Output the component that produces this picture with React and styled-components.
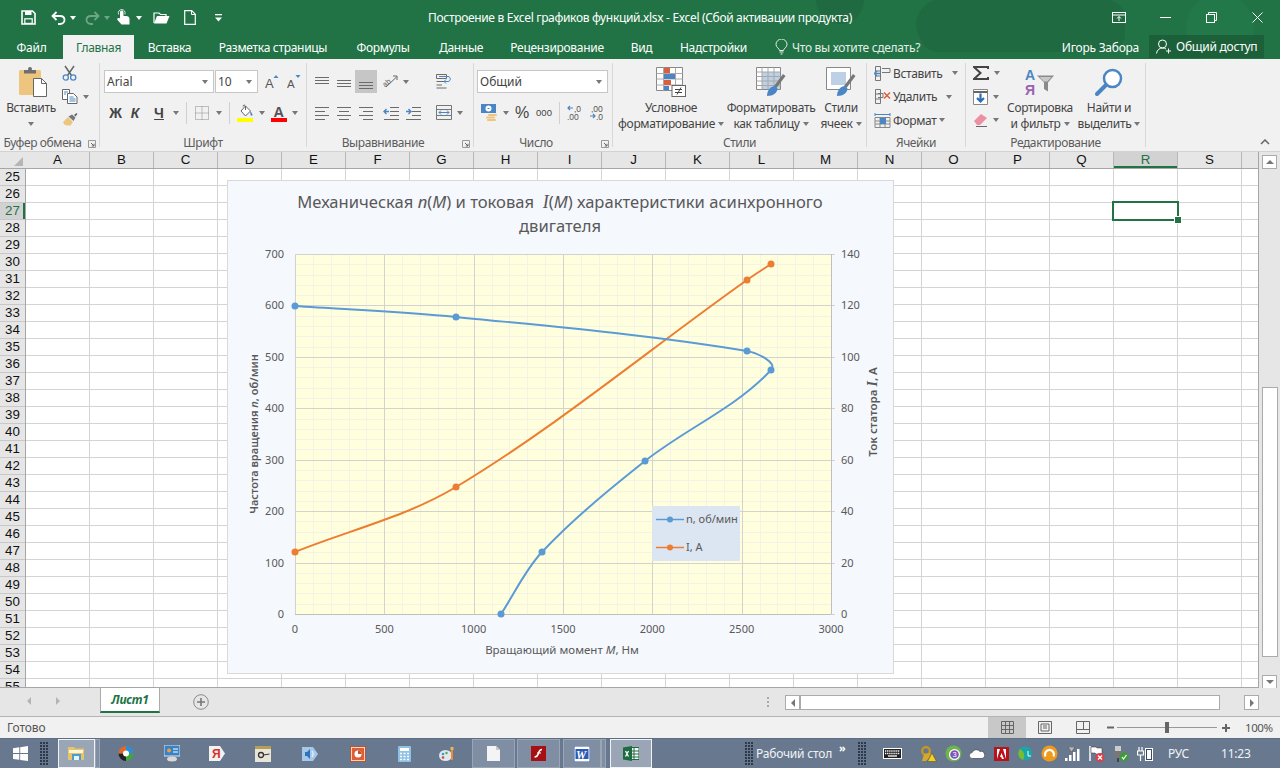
import React from 'react';
import styled, { createGlobalStyle } from 'styled-components';

const ui = '"Noto Sans", "Open Sans", sans-serif';
const green = '#217346';

const GlobalStyle = createGlobalStyle`
  html, body { margin: 0; padding: 0; background: #fff; }
  body { font-family: ${ui}; font-size: 12px; color: #444; }
  * { box-sizing: border-box; }
`;

const Frame = styled.div`
  width: 1280px;
  height: 768px;
  overflow: hidden;
  display: flex;
  flex-direction: column;
`;

/* ---------- title bar ---------- */
const Head = styled.header`
  position: relative;
  background: ${green};
  height: 59px;
  flex: none;
`;
const Pattern = styled.svg`
  position: absolute;
  left: 780px;
  top: 0;
`;
const TitleRow = styled.div`
  position: relative;
  height: 35px;
  display: grid;
  grid-template-columns: 1fr auto 1fr;
  align-items: center;
`;
const Qat = styled.div`
  display: flex;
  align-items: center;
  padding-left: 21px;
  height: 100%;
`;
const QatBtn = styled.div`
  display: flex;
  align-items: center;
  margin-left: ${p => p.$ml || 0}px;
  opacity: ${p => (p.$dim ? 0.35 : 1)};
`;
const Title = styled.div`
  color: #fff;
  font-size: 12px;
  letter-spacing: -0.33px;
  white-space: nowrap;
`;
const WinBtns = styled.div`
  display: flex;
  justify-content: flex-end;
`;
const WinBtn = styled.div`
  width: 46px;
  height: 30px;
  display: flex;
  align-items: center;
  justify-content: center;
`;
const TabRow = styled.nav`
  position: relative;
  height: 24px;
  display: flex;
  align-items: stretch;
`;
const Tab = styled.div`
  width: ${p => p.$w}px;
  display: flex;
  align-items: center;
  justify-content: center;
  color: ${p => (p.$active ? green : '#fff')};
  background: ${p => (p.$active ? '#f1f1f1' : 'transparent')};
  letter-spacing: -0.3px;
  white-space: nowrap;
`;
const Tell = styled.div`
  display: flex;
  align-items: center;
  gap: 4px;
  margin-left: 14px;
  color: #e3eee8;
  letter-spacing: -0.3px;
`;
const User = styled.div`
  margin-left: auto;
  display: flex;
  align-items: center;
  color: #fff;
  letter-spacing: -0.25px;
  white-space: nowrap;
`;
const Share = styled.div`
  width: 115px;
  height: 23px;
  margin: 0 16px 1px 10px;
  background: #1b6038;
  display: flex;
  align-items: center;
  gap: 4px;
  padding-left: 7px;
`;

/* ---------- ribbon ---------- */
const Ribbon = styled.div`
  position: relative;
  flex: none;
  height: 93px;
  background: #f1f1f1;
  border-bottom: 1px solid #d2d2d2;
  padding-top: 4px;
  display: flex;
  align-items: flex-start;
`;
const Group = styled.section`
  width: ${p => p.$w}px;
  height: 84px;
  flex: none;
  border-right: 1px solid #d8d8d8;
  display: flex;
  flex-direction: column;
`;
const GroupBody = styled.div`
  height: 73px;
  display: flex;
  padding-left: ${p => p.$pl || 0}px;
  flex-direction: ${p => (p.$col ? 'column' : 'row')};
`;
const GroupLabel = styled.div`
  height: 14px;
  line-height: 14px;
  margin-bottom: -3px;
  display: flex;
  color: #5c5c5c;
  letter-spacing: -0.4px;
  white-space: nowrap;
  span { flex: 1; text-align: center; }
`;
const Launcher = styled.svg`
  width: 14px;
  flex: none;
  margin-top: 4px;
`;
const BigBtn = styled.div`
  width: ${p => p.$w}px;
  margin-left: ${p => p.$ml || 0}px;
  flex: none;
  display: flex;
  flex-direction: column;
  align-items: center;
  line-height: 16px;
  color: #444;
  letter-spacing: -0.32px;
  white-space: nowrap;
`;
const BigIcon = styled.div`
  height: 37px;
  padding-left: ${p => p.$pl || 0}px;
  display: flex;
  align-items: center;
  justify-content: center;
`;
const TextLine = styled.div`
  height: 16px;
  display: flex;
  align-items: center;
  gap: 3px;
`;
const Caret = styled.i`
  display: inline-block;
  flex: none;
  width: 0;
  height: 0;
  margin-left: ${p => p.$ml || 0}px;
  border-left: 3.5px solid transparent;
  border-right: 3.5px solid transparent;
  border-top: 4px solid ${p => p.$c || '#777'};
`;
const Stack = styled.div`
  display: flex;
  flex-direction: column;
  gap: ${p => p.$gap || 0}px;
  padding-top: ${p => p.$pt || 0}px;
  margin-left: ${p => p.$ml || 0}px;
  width: ${p => (p.$w ? p.$w + 'px' : 'auto')};
  flex: none;
`;
const Row = styled.div`
  display: flex;
  align-items: center;
  height: ${p => p.$h || 23}px;
  margin-top: ${p => p.$mt || 0}px;
`;
const IconBtn = styled.div`
  width: ${p => p.$w || 22}px;
  height: ${p => p.$h || 23}px;
  margin-left: ${p => p.$ml || 0}px;
  flex: none;
  display: flex;
  align-items: center;
  justify-content: center;
  background: ${p => (p.$active ? '#c6c6c6' : 'transparent')};
`;
const Select = styled.div`
  width: ${p => p.$w}px;
  height: 23px;
  margin-left: ${p => p.$ml || 0}px;
  flex: none;
  background: #fff;
  border: 1px solid #c6c6c6;
  display: flex;
  align-items: center;
  justify-content: space-between;
  padding: 0 5px 0 2px;
  color: #444;
`;
const Sep = styled.div`
  width: 1px;
  height: 22px;
  flex: none;
  margin: 0 ${p => p.$r || 0}px 0 ${p => p.$l || 0}px;
  background: #d0d0d0;
`;
const FontLetter = styled.span`
  font-family: "Liberation Sans", sans-serif;
  font-size: ${p => p.$s || 14}px;
  font-weight: ${p => p.$wt || 700};
  font-style: ${p => (p.$it ? 'italic' : 'normal')};
  text-decoration: ${p => (p.$un ? 'underline' : 'none')};
  color: #444;
`;
const CellRow = styled.div`
  height: 20px;
  display: flex;
  align-items: center;
  color: #444;
  letter-spacing: -0.35px;
  white-space: nowrap;
  svg { margin-right: 2px; }
`;
const Collapse = styled.svg`
  position: absolute;
  right: 10px;
  bottom: 6px;
`;

/* ---------- sheet ---------- */
const SheetArea = styled.div`
  height: 536px;
  flex: none;
  display: flex;
  background: #e6e6e6;
`;
const GridPane = styled.div`
  width: 1259px;
  flex: none;
  display: flex;
  flex-direction: column;
  border-right: 1px solid #a6a6a6;
  border-bottom: 1px solid #a6a6a6;
`;
const ColRow = styled.div`
  height: 17px;
  flex: none;
  display: flex;
  background: #e6e6e6;
  border-bottom: 1px solid #a6a6a6;
  overflow: hidden;
`;
const Corner = styled.div`
  width: 26px;
  flex: none;
  display: flex;
  align-items: flex-end;
  justify-content: flex-end;
  padding: 0 3px 2px 0;
  &::after {
    content: '';
    border-left: 9px solid transparent;
    border-bottom: 9px solid #b5b5b5;
  }
`;
const ColHead = styled.div`
  width: 64px;
  flex: none;
  text-align: center;
  font: 13.33px/16px "Liberation Sans", sans-serif;
  color: ${p => (p.$sel ? green : '#111')};
  background: ${p => (p.$sel ? '#d2d2d2' : 'transparent')};
  border-right: 1px solid #b8b8b8;
  box-shadow: ${p => (p.$sel ? `inset 0 -2px 0 ${green}` : 'none')};
`;
const BodyRow = styled.div`
  flex: 1;
  min-height: 0;
  display: flex;
`;
const RowHeads = styled.div`
  width: 26px;
  flex: none;
  background: #e6e6e6;
  border-right: 1px solid #a6a6a6;
  overflow: hidden;
`;
const RowHead = styled.div`
  height: 17px;
  flex: none;
  text-align: center;
  font: 13.33px/16px "Liberation Sans", sans-serif;
  color: ${p => (p.$sel ? green : '#111')};
  background: ${p => (p.$sel ? '#d2d2d2' : 'transparent')};
  border-bottom: 1px solid #c8c8c8;
  box-shadow: ${p => (p.$sel ? `inset -2px 0 0 ${green}` : 'none')};
`;
const Cells = styled.div`
  position: relative;
  flex: 1;
  overflow: hidden;
  background-color: #fff;
  background-image:
    linear-gradient(to right, transparent 63px, #d4d4d4 63px),
    linear-gradient(to bottom, transparent 16px, #d4d4d4 16px);
  background-size: 64px 17px;
`;
const Selection = styled.div`
  position: absolute;
  left: 1086px;
  top: 32px;
  width: 67px;
  height: 20px;
  border: 2px solid ${green};
  &::after {
    content: '';
    position: absolute;
    right: -4px;
    bottom: -4px;
    width: 6px;
    height: 6px;
    background: ${green};
    border: 1px solid #fff;
    box-sizing: content-box;
    margin: -1px;
  }
`;
const ChartBox = styled.svg`
  position: absolute;
  left: 201px;
  top: 11px;
  font-family: ${ui};
`;
const VScroll = styled.div`
  width: 21px;
  flex: none;
  display: flex;
  flex-direction: column;
  align-items: center;
  padding-top: 3px;
`;
const ScrollBtn = styled.div`
  width: ${p => p.$w || 15}px;
  height: ${p => p.$h || 14}px;
  margin-top: ${p => p.$mt || 0}px;
  flex: none;
  background: #fff;
  border: 1px solid #ababab;
  display: flex;
  align-items: center;
  justify-content: center;
`;
const Thumb = styled.div`
  width: 16px;
  height: 270px;
  margin-top: 218px;
  flex: none;
  background: #fff;
  border: 1px solid #ababab;
`;
const TriUp = styled.i`
  width: 0;
  height: 0;
  border-left: 4px solid transparent;
  border-right: 4px solid transparent;
  border-bottom: 4px solid #777;
`;
const TriDown = styled.i`
  width: 0;
  height: 0;
  border-left: 4px solid transparent;
  border-right: 4px solid transparent;
  border-top: 4px solid #777;
`;
const TriSide = styled.i`
  width: 0;
  height: 0;
  border-top: 4px solid transparent;
  border-bottom: 4px solid transparent;
  border-${p => (p.$left ? 'right' : 'left')}: 4px solid ${p => p.$c || '#777'};
`;

/* ---------- sheet tabs + status ---------- */
const TabBar = styled.div`
  height: 28px;
  flex: none;
  background: #e6e6e6;
  display: flex;
  align-items: flex-start;
`;
const NavArrows = styled.div`
  width: 100px;
  height: 25px;
  flex: none;
  display: flex;
  align-items: center;
  gap: 25px;
  padding-left: 27px;
`;
const SheetTab = styled.div`
  width: 60px;
  height: 25px;
  flex: none;
  background: #fff;
  border-left: 1px solid #ababab;
  border-right: 1px solid #ababab;
  border-bottom: 2px solid ${green};
  color: ${green};
  font-weight: 700;
  font-style: italic;
  font-size: 12px;
  letter-spacing: -0.2px;
  display: flex;
  align-items: center;
  justify-content: center;
`;
const AddSheet = styled.svg`
  margin: 6px 0 0 33px;
  flex: none;
`;
const Grip = styled.div`
  width: 2px;
  height: 10px;
  margin: 9px 16px 0 auto;
  flex: none;
  background-image: linear-gradient(#aaa 2px, transparent 2px);
  background-size: 2px 4px;
`;
const HScroll = styled.div`
  display: flex;
  align-items: center;
  width: 473px;
  height: 15px;
  margin: 7px 22px 0 0;
  flex: none;
`;
const HThumb = styled.div`
  width: 420px;
  height: 15px;
  flex: none;
  background: #fff;
  border: 1px solid #ababab;
  margin: 0 24px 0 0;
`;
const Status = styled.footer`
  height: 22px;
  flex: none;
  background: #f1f1f1;
  border-top: 1px solid #b4b4b4;
  display: flex;
  align-items: center;
  padding-left: 7px;
  color: #555;
  letter-spacing: -0.1px;
`;
const StatusText = styled.span`
  width: 981px;
  flex: none;
`;
const ViewBtn = styled.div`
  width: 38px;
  height: 21px;
  flex: none;
  display: flex;
  align-items: center;
  justify-content: center;
  background: ${p => (p.$active ? '#c8c8c8' : 'transparent')};
`;
const Zoom = styled.div`
  display: flex;
  align-items: center;
  margin-left: 5px;
  color: #555;
`;
const Slider = styled.div`
  width: 100px;
  height: 1px;
  margin: 0 5px 0 3px;
  background: #999;
  display: flex;
  justify-content: center;
  align-items: center;
  &::after {
    content: '';
    width: 4px;
    height: 11px;
    background: #666;
  }
`;
const Percent = styled.span`
  margin-left: 15px;
  font-size: 11.5px;
  letter-spacing: -0.4px;
`;

/* ---------- taskbar ---------- */
const Taskbar = styled.div`
  height: 30px;
  flex: none;
  background: #68798f;
  display: flex;
  align-items: center;
  color: #f0f3f6;
  border-top: 1px solid #5d6d83;
`;
const TaskSlot = styled.div`
  width: ${p => p.$w}px;
  height: 29px;
  margin-left: ${p => p.$ml || 0}px;
  flex: none;
  display: flex;
  align-items: center;
  justify-content: ${p => (p.$start ? 'flex-start' : 'center')};
  white-space: nowrap;
`;
const TaskBtn = styled(TaskSlot)`
  background: ${p => (p.$active ? '#9aa6b6' : '#7f8ea2')};
  border: 1px solid ${p => (p.$active ? '#f1f4f7' : '#9aa6b6')};
`;
const Dots = styled.div`
  width: 8px;
  height: 23px;
  margin-left: ${p => p.$ml || 0}px;
  flex: none;
  background-image: radial-gradient(circle at 1px 1px, #2e3a4a 1px, transparent 1.2px);
  background-size: 3px 3px;
`;
const TaskText = styled.span`
  font-size: 12px;
  letter-spacing: -0.2px;
  margin-left: ${p => p.$ml || 0}px;
  white-space: nowrap;
`;
const More = styled.span`
  font-size: 11px;
  font-weight: 700;
  line-height: 11px;
  margin: -12px 0 0 7px;
  color: #fff;
`;

/* ---------- icons ---------- */
const S = ({ w = 16, h = 16, vb, children, ...rest }) => (
  <svg width={w} height={h} viewBox={vb || `0 0 ${w} ${h}`} fill="none" {...rest}>{children}</svg>
);
const blue = '#4a86c5';

const SaveIco = () => (
  <S w={15} h={15}>
    <path d="M1 1h10.500L14 3.500V14H1z" stroke="#fff" strokeWidth="1.600" />
    <rect x="4" y="1" width="6.500" height="4" fill="#fff" />
    <rect x="3.800" y="8.800" width="7.400" height="4.600" stroke="#fff" strokeWidth="1.200" />
  </S>
);
const UndoIco = ({ flip }) => (
  <S w={15} h={14}>
    <g transform={flip ? 'matrix(-1 0 0 1 15 0)' : undefined}>
      <path d="M5.500 1L1.500 5l4 4" stroke="#fff" strokeWidth="1.800" />
      <path d="M2 5h7c3 0 4.500 1.700 4.500 3.800S12 13 9 13H7" stroke="#fff" strokeWidth="1.800" />
    </g>
  </S>
);
const TouchIco = () => (
  <S w={15} h={18}>
    <path d="M4 9V3.200C4 1 7.500 1 7.500 3.200V7h2.500c2.200 0 3.500 1 3.500 3v5.500H5.500L1.500 11c-1-1.600.8-2.600 2.500-1.500z" fill="#fff" />
    <path d="M2.500 5.500C1.600 2.500 3.500.5 5.700.5S9.700 2.500 9 5.500" stroke="#fff" strokeWidth=".8" />
  </S>
);
const OpenIco = () => (
  <S w={17} h={13}>
    <path d="M1 12V2h5l1.500 1.500H13V5" stroke="#fff" strokeWidth="1.200" />
    <path d="M1 12.500L4 5h12.500l-3 7.500z" fill="#fff" />
  </S>
);
const NewIco = ({ c = '#fff' }) => (
  <S w={12} h={15}>
    <path d="M.7.7h7l3.600 3.600v10H.7z" stroke={c} strokeWidth="1.200" />
    <path d="M7.500.7v3.800h3.800" stroke={c} />
  </S>
);
const PageIco = () => (
  <S w={13} h={15}>
    <path d="M0 0h9l4 4v11H0z" fill="#f4f4f4" />
    <path d="M9 0v4h4z" fill="#c8c8c8" />
  </S>
);
const Customize = () => (
  <S w={9} h={9}>
    <rect x="1" y="1" width="7" height="1.300" fill="#fff" />
    <path d="M1 4.500h7L4.500 8.500z" fill="#fff" />
  </S>
);
const RibbonDisp = () => (
  <S w={14} h={11}>
    <rect x=".5" y=".5" width="13" height="10" stroke="#fff" />
    <path d="M.5 3h13" stroke="#fff" />
    <path d="M7 9V4.500M5 6.500l2-2 2 2" stroke="#fff" />
  </S>
);
const MinIco = () => <S w={11} h={11}><path d="M0 5.500h11" stroke="#fff" /></S>;
const RestoreIco = () => (
  <S w={11} h={11}>
    <rect x=".5" y="2.500" width="8" height="8" stroke="#fff" />
    <path d="M2.500 2.500v-2h8v8h-2" stroke="#fff" />
  </S>
);
const CloseIco = () => <S w={11} h={11}><path d="M.5.5l10 10M10.500.5l-10 10" stroke="#fff" /></S>;
const Bulb = () => (
  <S w={13} h={16}>
    <path d="M4.500 11.500C4.500 9.500 1 8.500 1 5.500a5.500 5.500 0 0111 0c0 3-3.500 4-3.500 6z" stroke="#e3eee8" />
    <path d="M4.500 13h4M5.500 15h2" stroke="#e3eee8" />
  </S>
);
const ShareIco = () => (
  <S w={16} h={15}>
    <circle cx="6.500" cy="5" r="4" stroke="#fff" />
    <path d="M.5 14.500c.6-3.500 2.700-5.500 6-5.500 1.500 0 2.500.3 3.500 1" stroke="#fff" />
    <path d="M12.500 9.500v5M10 12h5" stroke="#fff" />
  </S>
);
const LaunchIco = () => (
  <Launcher height="8" viewBox="0 0 14 8">
    <path d="M3.500.5h7v7h-7z" stroke="#999" fill="none" />
    <path d="M6 3l3 3M9 3.800V6H6.800" stroke="#666" fill="none" />
  </Launcher>
);
const PasteIco = () => (
  <S w={28} h={30}>
    <rect x="0" y="3" width="22" height="25" rx="1.500" fill="#eec57e" />
    <path d="M5 3h12v3.500H5z" fill="#6f6f6f" />
    <circle cx="11" cy="2" r="2" fill="#6f6f6f" />
    <path d="M14.500 11.500h8l5 5v13h-13z" fill="#fff" stroke="#666" />
    <path d="M22.500 11.500v5h5" stroke="#666" />
  </S>
);
const CutIco = () => (
  <S w={15} h={16}>
    <path d="M3 1l6.500 9.500M12 1L5.500 10.500" stroke="#666" strokeWidth="1.500" />
    <circle cx="3.800" cy="12.500" r="2.600" stroke={blue} strokeWidth="1.300" />
    <circle cx="11.200" cy="12.500" r="2.600" stroke={blue} strokeWidth="1.300" />
  </S>
);
const CopyIco = () => (
  <S w={16} h={15}>
    <path d="M.5.500h7v10h-7z" fill="#fff" stroke="#666" />
    <path d="M5.500 4.500h6l3.500 3.500v6.500H5.500z" fill="#fff" stroke="#666" />
    <path d="M2 3h4M2 5h2M7.500 8h4M7.500 10h6M7.500 12h6" stroke={blue} />
  </S>
);
const BrushIco = () => (
  <S w={16} h={15}>
    <path d="M1 10l5-5 5 5-3 4-2-1-1 1-1.500-1.500-1 .5z" fill="#eec57e" />
    <path d="M6.500 4.500l3.500-2 3.500 3-2 3.500z" fill="#777" />
    <path d="M12 3l2.500-2 1 1-2 2.500z" fill="#666" />
  </S>
);
const GrowA = ({ up, s }) => (
  <S w={14} h={16}>
    <text x="0" y="14" fontFamily="Liberation Sans" fontSize={s} fill="#555">A</text>
    <path d={up ? 'M8.500 4L11 1l2.500 3z' : 'M8.500 1h5L11 4z'} fill={blue} />
  </S>
);
const BordersIco = () => (
  <S w={14} h={14}>
    <path d="M.5.500h13v13H.5zM7 .5v13M.5 7h13" stroke="#888" strokeDasharray="1 1" />
  </S>
);
const FillIco = () => (
  <S w={17} h={18}>
    <path d="M4 7l4.500-5 5 5-5 5z" fill="#fff" stroke="#666" />
    <path d="M6 2.500C6 .5 8.500.5 8.500 3v3" stroke="#666" fill="none" />
    <path d="M13 7c2 2 2.500 3 2.500 4s-2 1-2-.5z" fill={blue} />
    <rect x="0" y="14" width="16" height="4" fill="#ffff00" />
  </S>
);
const FontColor = () => (
  <S w={17} h={18}>
    <text x="2.500" y="12.500" fontFamily="Liberation Sans" fontWeight="700" fontSize="14.500" fill="#555">A</text>
    <rect x="0" y="14" width="16" height="4" fill="#ff0000" />
  </S>
);
const Lines = ({ ys, xs = [[0, 14]], w = 14, h = 14, c = '#6b6b6b' }) => (
  <S w={w} h={h}>
    {ys.map((y, i) => {
      const [a, b] = xs[i % xs.length];
      return <path key={y} d={`M${a} ${y + 0.5}H${b}`} stroke={c} />;
    })}
  </S>
);
const OrientIco = () => (
  <S w={16} h={15}>
    <path d="M4 13L14.500 3M11 2h4v4" stroke="#666" />
    <text x="0" y="11" fontFamily="Liberation Sans" fontSize="7.500" fill="#666" transform="rotate(-40 5 8)">ab</text>
  </S>
);
const IndentIco = ({ rev }) => (
  <S w={16} h={14}>
    <path d="M7 1.500h9M7 5.500h9M7 9.500h9M1 13.500h15" stroke="#6b6b6b" />
    <path d={rev ? 'M1 5.500h5M3.500 3L6 5.500 3.500 8' : 'M1 5.500h5M3.500 3L1 5.500 3.500 8'} stroke={blue} strokeWidth="1.400" />
  </S>
);
const WrapIco = () => (
  <S w={16} h={15}>
    <path d="M.5.500h10v4H.5zM.5 7.500h10M.5 11h5.500M.5 14h10" stroke="#6b6b6b" />
    <path d="M3 2.500h9c3 0 3 5 0 5H8M10 5.500l-2 2 2 2" stroke={blue} />
  </S>
);
const MergeIco = () => (
  <S w={16} h={15}>
    <path d="M.5.500h15v14H.5zM.5 4.500h15M.5 10.500h15" stroke="#777" />
    <path d="M3 7.500h10M5 5.500l-2 2 2 2M11 5.500l2 2-2 2" stroke={blue} />
  </S>
);
const CurrencyIco = () => (
  <S w={17} h={17}>
    <rect x="0" y="0" width="15" height="9" fill={blue} />
    <ellipse cx="7.500" cy="4.500" rx="3" ry="3" fill="#fff" />
    <path d="M6.500 4.500h2" stroke={blue} />
    <rect x="7" y="10" width="9" height="2" rx="1" fill="#eec57e" />
    <rect x="5" y="12.500" width="9" height="2" rx="1" fill="#eec57e" />
    <rect x="6" y="15" width="9" height="2" rx="1" fill="#eec57e" />
  </S>
);
const ZeroIco = ({ dec }) => (
  <S w={15} h={15}>
    <text x={dec ? 1 : 7} y="6.500" fontFamily="Liberation Sans" fontSize="8.500" fill="#555">{dec ? ',00' : ',0'}</text>
    <text x={dec ? 6 : 0} y="14.500" fontFamily="Liberation Sans" fontSize="8.500" fill="#555">{dec ? ',0' : ',00'}</text>
    {dec
      ? <path d="M0 11h5M3 9l2 2-2 2" stroke={blue} strokeWidth="1.200" />
      : <path d="M1 3h5M3 1L1 3l2 2" stroke={blue} strokeWidth="1.200" />}
  </S>
);
const CondIco = () => (
  <S w={30} h={30}>
    <path d="M.5.500h26v23H.5z" fill="#fff" stroke="#888" />
    <path d="M7.500.5v23M19.500.5v23M.5 6.500h26M.5 12h26M.5 18h26" stroke="#aaa" />
    <rect x="8" y="1" width="6" height="5" fill="#d9603b" />
    <rect x="8" y="7" width="11" height="5" fill={blue} />
    <rect x="8" y="13" width="7" height="5" fill="#d9603b" />
    <rect x="8" y="19" width="5" height="4" fill={blue} />
    <rect x="16" y="18.500" width="13.500" height="11" fill="#fff" stroke="#666" />
    <path d="M19 22.500h7M19 25.500h7M25 20.500l-4 7" stroke="#444" />
  </S>
);
const TableIco = ({ cell }) => (
  <S w={30} h={30}>
    <path d="M.5.500h24v22H.5z" fill="#fff" stroke="#888" />
    {cell
      ? <rect x="5" y="5" width="15" height="13" fill="#bdd0e6" />
      : <rect x="6" y="5" width="18" height="17" fill="#bdd0e6" />}
    {!cell && <path d="M6 .5v22M12 .5v22M18 .5v22M.5 5h24M.5 9.500h24M.5 14h24M.5 18.500h24" stroke="#a8a8a8" />}
    <path d="M18 19L27 7l2.500 2-9 12z" fill="#777" />
    <path d="M11 29c0-6 4-10 8-10l2.500 2.500c0 4-4 7.500-10.500 7.500z" fill={blue} />
  </S>
);
const CellInsert = () => (
  <S w={17} h={15}>
    <path d="M1.500.5h5v14h-5zM1.500 5h5M1.500 10h5" stroke="#777" />
    <path d="M8 2.500h8v4H8" stroke="#777" />
    <path d="M0 7.500h7M3 5L.5 7.500 3 10" stroke={blue} strokeWidth="1.300" />
  </S>
);
const CellDelete = () => (
  <S w={17} h={15}>
    <path d="M1.500.5h5v14h-5zM1.500 5h5M1.500 10h5" stroke="#777" />
    <path d="M4 4.500h5v4H4" stroke="#777" />
    <path d="M10 3.500l6 6M16 3.500l-6 6" stroke="#d9603b" strokeWidth="1.500" />
  </S>
);
const CellFormat = () => (
  <S w={17} h={15}>
    <path d="M1 4.500h15v10H1zM1 8h15M1 11h15M6 4.500v10M11 4.500v10" stroke="#888" />
    <rect x="6" y="5" width="6" height="6" fill={blue} />
    <path d="M1 1.500h15M1 0v3M16 0v3" stroke={blue} />
  </S>
);
const FillDown = () => (
  <S w={15} h={16}>
    <path d="M.5.500h14v15H.5z" fill="#fff" stroke="#888" />
    <path d="M.5 3h14" stroke="#666" strokeWidth="2" />
    <path d="M7.500 4.500v8M4 9l3.500 3.500L11 9" stroke="#2c6db5" strokeWidth="2.200" />
  </S>
);
const EraseIco = () => (
  <S w={15} h={14}>
    <path d="M1 8l7-7 6 4-7 7H4z" fill="#ec8fa0" />
    <path d="M3 13.500h11" stroke="#666" />
  </S>
);
const SortIco = () => (
  <S w={30} h={30}>
    <text x="0" y="13" fontFamily="Liberation Sans" fontWeight="700" fontSize="14" fill={blue}>A</text>
    <text x="0" y="28" fontFamily="Liberation Sans" fontWeight="700" fontSize="14" fill="#9a62b3">Я</text>
    <path d="M12 8.500h17l-6 7v9l-4-2.500v-6.500z" fill="#8a8a8a" />
    <path d="M14.500 10h12l-4 4.500h-4z" fill="#c8c8c8" />
  </S>
);
const FindIco = () => (
  <S w={28} h={28}>
    <circle cx="17.500" cy="10.500" r="8.500" fill="#fff" stroke={blue} strokeWidth="2.500" />
    <path d="M11 17L2 26" stroke={blue} strokeWidth="4" strokeLinecap="round" />
  </S>
);
const CollapseIco = () => (
  <Collapse width="10" height="6"><path d="M1 5l4-4 4 4" stroke="#666" strokeWidth="1.500" fill="none" /></Collapse>
);

/* taskbar icons */
const WinIco = () => (
  <S w={15} h={15}>
    <path d="M0 2.200L6.300 1.300V7H0zM7.200 1.200L15 0v7H7.200zM0 8h6.300v5.800L0 12.900zM7.200 8H15v7l-7.800-1.100z" fill="#fff" />
  </S>
);
const FolderIco = () => (
  <S w={17} h={15}>
    <path d="M0 1h6l1 1.500h9V14H0z" fill="#e6c467" />
    <rect x="1" y="4" width="14" height="3" fill="#fff7d6" />
    <rect x="4" y="8" width="9" height="6" fill="#4e9cd6" />
    <rect x="6" y="10" width="5" height="4" fill="#e9f3fa" />
  </S>
);
const GreenBall = () => (
  <S w={17} h={17}>
    <circle cx="8.500" cy="8.500" r="8" fill="#6fb64a" />
    <circle cx="9.500" cy="9.500" r="5.500" fill="#fff" />
    <circle cx="9.500" cy="9.500" r="4.300" fill="#7a54b8" />
    <text x="7.500" y="12.300" fontFamily="Liberation Sans" fontSize="7.500" fill="#fff">3</text>
  </S>
);
const OrangeBall = () => (
  <S w={17} h={17}>
    <circle cx="8.500" cy="8.500" r="8" fill="#ef9a1d" />
    <path d="M4.500 11.500a4.500 4.500 0 118 0" stroke="#fff" strokeWidth="2.200" />
  </S>
);
const ColorBall = () => (
  <S w={16} h={15}>
    <path d="M8 7.500L8 0a7.500 7.500 0 017.500 7.500z" fill="#2a8fd8" />
    <path d="M8 7.500h7.500A7.500 7.500 0 018 15z" fill="#3da63d" />
    <path d="M8 7.500V15A7.500 7.500 0 01.5 7.500z" fill="#222" />
    <path d="M8 7.500H.5A7.500 7.500 0 018 0z" fill="#e0662a" />
    <circle cx="8" cy="7.500" r="3" fill="#fff" />
  </S>
);
const PresIco = () => (
  <S w={16} h={17}>
    <rect x="0" y="0" width="16" height="11" fill="#3b82c4" stroke="#d7e6f3" />
    <circle cx="5" cy="5.500" r="2" fill="#f0a038" />
    <path d="M9 4h5M9 7h5" stroke="#fff" />
    <ellipse cx="8" cy="14" rx="5" ry="2.500" fill="#d8d8d8" />
  </S>
);
const YaIco = () => (
  <S w={16} h={17}>
    <path d="M0 1h11l5 7.500-5 7.500H0z" fill="#f2f2f2" />
    <text x="3" y="13" fontFamily="Liberation Sans" fontWeight="700" fontSize="12" fill="#d6312b">Я</text>
  </S>
);
const SteamIco = () => (
  <S w={16} h={16}>
    <rect x="0" y="0" width="16" height="16" fill="#e8e4d8" />
    <rect x="0" y="0" width="16" height="3" fill="#b59f56" />
    <circle cx="6" cy="9" r="2.500" stroke="#333" strokeWidth="1.300" />
    <path d="M8.500 9l6-1" stroke="#333" />
  </S>
);
const SoundIco = () => (
  <S w={16} h={16}>
    <path d="M0 1h11l5 7-5 7H0z" fill="#a8c8ea" />
    <path d="M3 6h2l3-3v10l-3-3H3z" fill="#2f74b8" />
    <path d="M10 5c1.500 2 1.500 4 0 6" stroke="#fff" />
  </S>
);
const PptIco = () => (
  <S w={16} h={16}>
    <rect x=".5" y=".5" width="15" height="15" fill="#f3d9c8" stroke="#c4512a" />
    <rect x="2" y="2" width="12" height="12" fill="#d9603b" />
    <circle cx="8" cy="8" r="3.500" fill="#fff" />
    <path d="M8 8V4.500A3.500 3.500 0 0111.500 8z" fill="#c4512a" />
  </S>
);
const CalcIco = () => (
  <S w={13} h={16}>
    <rect x="0" y="0" width="13" height="16" rx="1" fill="#8ec1e6" />
    <rect x="2" y="2" width="9" height="3" fill="#fff" />
    <path d="M2 7.500h9M2 10.500h9M2 13.500h9" stroke="#fff" strokeDasharray="2 1.500" strokeWidth="1.500" />
  </S>
);
const PaletteIco = () => (
  <S w={16} h={16}>
    <ellipse cx="6.500" cy="9.500" rx="6.500" ry="5.500" fill="#dfe7ef" />
    <circle cx="4" cy="8" r="1.300" fill="#3d9ad6" />
    <circle cx="7.500" cy="7" r="1.300" fill="#58b05c" />
    <circle cx="4" cy="11.500" r="1.300" fill="#d6473d" />
    <path d="M13 14V4" stroke="#ee8c2d" strokeWidth="2" />
    <path d="M11.500 1h3v3h-3z" fill="#dcbd5a" />
  </S>
);
const FlashIco = () => (
  <S w={15} h={15}>
    <rect x="0" y="0" width="15" height="15" fill="#a80f14" />
    <path d="M11 3.500C8 3.500 8 6 7.200 8 6.500 10 6 11 3.500 11" stroke="#fff" strokeWidth="1.600" fill="none" />
    <path d="M6 7h4" stroke="#fff" />
  </S>
);
const WordIco = () => (
  <S w={16} h={16}>
    <rect x="0" y="0" width="16" height="16" fill="#fff" stroke="#2b5bb5" />
    <rect x="1.500" y="3" width="13" height="10" fill="#2b5bb5" />
    <text x="2" y="12.500" fontFamily="Liberation Serif" fontWeight="700" fontStyle="italic" fontSize="11.500" fill="#fff">W</text>
  </S>
);
const ExcelIco = () => (
  <S w={16} h={15}>
    <rect x="7" y="1.500" width="9" height="12" fill="#fff" stroke="#1d6b40" />
    <path d="M7 5h9M7 8h9M7 11h9M11 1.500v12" stroke="#1d6b40" />
    <path d="M0 1.500L9 0v15L0 13.500z" fill="#1d6b40" />
    <path d="M2.500 5l3 5.500M5.500 5l-3 5.500" stroke="#fff" strokeWidth="1.300" />
  </S>
);
const KeyboardIco = () => (
  <S w={19} h={11}>
    <rect x=".5" y=".5" width="18" height="10" fill="#222" stroke="#fff" />
    <path d="M2 3h15M2 5.500h15" stroke="#fff" strokeWidth="1.400" strokeDasharray="1.300 .8" />
    <path d="M5 8h9" stroke="#fff" strokeWidth="1.300" />
  </S>
);
const KeyIco = () => (
  <S w={16} h={16}>
    <circle cx="5" cy="5" r="3.800" stroke="#c89a1c" strokeWidth="2.200" />
    <path d="M3 8L1 15h4l3-3 2-5z" fill="#d8a82a" />
    <path d="M11 7l-4.500 8.500h9z" fill="#f4d11a" stroke="#444" strokeWidth=".5" />
  </S>
);
const CloudIco = () => (
  <S w={16} h={11}>
    <path d="M3.500 10.500a3 3 0 01-.3-6A4.500 4.500 0 0111 3.500a3.500 3.500 0 012 7z" fill="#fff" stroke="#333" strokeWidth=".6" />
  </S>
);
const AdobeIco = () => (
  <S w={15} h={14}>
    <rect x="0" y="0" width="15" height="14" fill="#b8121a" />
    <path d="M6 2H3v10zM9 2h3v10zM7.500 6L10 12H8l-.8-2H6z" fill="#fff" />
  </S>
);
const TealIco = () => (
  <S w={16} h={15}>
    <circle cx="8" cy="7.500" r="7" fill="#1aa6a8" />
    <path d="M3 3c-3 4-2 9 3 11 2-3 2-8-3-11z" fill="#7cbb2a" />
    <path d="M11 5v5h3" stroke="#dff" />
  </S>
);
const SignalIco = () => (
  <S w={16} h={14}>
    <path d="M3 0h7L6.500 5z" fill="#bbb" stroke="#444" strokeWidth=".5" />
    <rect x="0" y="11" width="2.500" height="3" fill="#fff" />
    <rect x="4" y="8" width="2.500" height="6" fill="#fff" />
    <rect x="8" y="5" width="2.500" height="9" fill="#fff" />
    <rect x="12" y="2" width="2.500" height="12" fill="#fff" />
  </S>
);
const FlagIco = () => (
  <S w={16} h={16}>
    <path d="M1 0v15" stroke="#fff" strokeWidth="1.500" />
    <path d="M2 1h5l1 1h5v6H7L6 7H2z" fill="#fff" stroke="#333" strokeWidth=".5" />
    <circle cx="11" cy="11.500" r="4.500" fill="#d9424a" />
    <path d="M9 9.500l4 4M13 9.500l-4 4" stroke="#fff" strokeWidth="1.300" />
  </S>
);
const UsbIco = () => (
  <S w={16} h={16}>
    <rect x="2" y="0" width="6" height="5" fill="#ccc" />
    <rect x="1" y="5" width="8" height="7" fill="#777" />
    <path d="M5 12v4" stroke="#444" strokeWidth="2" />
    <circle cx="11" cy="11" r="4.500" fill="#3f9b3a" />
    <path d="M9 11l1.500 2L13.500 9" stroke="#fff" strokeWidth="1.200" />
  </S>
);
const BatteryIco = () => (
  <S w={16} h={14}>
    <path d="M2 0v4M5 0v4M0.500 4h6v4h-6zM3.500 8v6" stroke="#fff" strokeWidth="1.200" />
    <rect x="8.500" y="1.500" width="7" height="12" fill="#3b4a5e" stroke="#fff" />
    <rect x="10" y="3" width="4" height="9" fill="#fff" />
  </S>
);

/* ---------- chart ---------- */
const left = 295, right = 831, top = 254, bottom = 614;
const nPts = [[295, 306], [456, 317], [747, 351], [771, 370], [645, 461], [542, 552], [501, 614]];
const iPts = [[295, 552], [456, 487], [747, 280], [771, 264]];

// гладкая линия как у Excel: касательная по соседям, длина по хорде
const smooth = pts => {
  const unit = (a, b) => {
    const dx = b[0] - a[0], dy = b[1] - a[1], l = Math.hypot(dx, dy) || 1;
    return [dx / l, dy / l];
  };
  let d = `M${pts[0][0]} ${pts[0][1]}`;
  for (let i = 0; i < pts.length - 1; i++) {
    const p0 = pts[i - 1] || pts[i], p1 = pts[i], p2 = pts[i + 1], p3 = pts[i + 2] || p2;
    const len = Math.hypot(p2[0] - p1[0], p2[1] - p1[1]) / 3;
    const t1 = unit(p0, p2), t2 = unit(p1, p3);
    d += `C${p1[0] + t1[0] * len} ${p1[1] + t1[1] * len} ${p2[0] - t2[0] * len} ${p2[1] - t2[1] * len} ${p2[0]} ${p2[1]}`;
  }
  return d;
};
const range = (n, f) => Array.from({ length: n }, (_, i) => f(i));
const xAt = i => left + (i * (right - left)) / 30;
const yAt = i => top + (i * (bottom - top)) / 35;

const AxisText = styled.text`
  font-size: 11px;
  fill: #595959;
`;
const AxisTitle = styled.text`
  font-size: ${p => p.$s || 11}px;
  font-weight: ${p => p.$wt || 600};
  fill: #595959;
`;
const ChartTitle = styled.text`
  font-size: 16.6px;
  fill: #595959;
`;

const Chart = () => (
  <ChartBox width="667" height="494" viewBox="227 180 667 494">
    <rect x="227.500" y="180.500" width="666" height="493" fill="#f5f8fd" stroke="#d9d9d9" />
    <ChartTitle x="560" y="208" textAnchor="middle">
      Механическая <tspan fontStyle="italic">n</tspan>(<tspan fontStyle="italic">M</tspan>) и токовая{'\u00a0\u00a0'}
      <tspan fontStyle="italic" fontFamily="Liberation Serif" fontSize="18">I</tspan>(<tspan fontStyle="italic">M</tspan>) характеристики асинхронного
    </ChartTitle>
    <ChartTitle x="560" y="232" textAnchor="middle">двигателя</ChartTitle>

    <rect x={left} y={top} width={right - left} height={bottom - top} fill="#ffffdd" />
    {range(31, i => i % 5 !== 0 && (
      <path key={i} d={`M${Math.round(xAt(i)) + 0.5} ${top}V${bottom}`} stroke="#f3f3e8" />
    ))}
    {range(36, i => i % 5 !== 0 && (
      <path key={i} d={`M${left} ${Math.round(yAt(i)) + 0.5}H${right}`} stroke="#f3f3e8" />
    ))}
    {range(7, i => (
      <path key={i} d={`M${Math.round(xAt(i * 5)) + 0.5} ${top}V${bottom}`} stroke="#d2d2d0" />
    ))}
    {range(8, i => (
      <path key={i} d={`M${left} ${Math.round(yAt(i * 5)) + 0.5}H${right + 4}`} stroke="#d2d2d0" />
    ))}
    <path d={`M${left} ${bottom + 0.5}H${right}`} stroke="#bfbfbf" />
    <path d={`M${right + 0.5} ${top}V${bottom}`} stroke="#bfbfbf" />

    {range(8, i => (
      <AxisText key={i} x="284" y={Math.round(yAt(i * 5)) + 4} textAnchor="end">{700 - i * 100}</AxisText>
    ))}
    {range(8, i => (
      <AxisText key={i} x="841" y={Math.round(yAt(i * 5)) + 4}>{140 - i * 20}</AxisText>
    ))}
    {range(7, i => (
      <AxisText key={i} x={xAt(i * 5)} y="633" textAnchor="middle">{i * 500}</AxisText>
    ))}
    <AxisTitle x="562" y="654" textAnchor="middle" $s={11.5} $wt={400}>
      Вращающий момент <tspan fontStyle="italic">M</tspan>, Нм
    </AxisTitle>
    <AxisTitle transform="translate(258 434) rotate(-90)" textAnchor="middle">
      Частота вращения <tspan fontStyle="italic">n</tspan>, об/мин
    </AxisTitle>
    <AxisTitle transform="translate(877 412) rotate(-90)" textAnchor="middle" $s={11.5}>
      Ток статора <tspan fontStyle="italic" fontFamily="Liberation Serif" fontSize="14">I</tspan>, А
    </AxisTitle>

    <rect x="652" y="506" width="88" height="55" fill="#dce6f2" />
    <path d="M656 519.500h28" stroke="#5b9bd5" strokeWidth="1.500" />
    <circle cx="670" cy="519.500" r="3" fill="#5b9bd5" />
    <path d="M656 547.500h28" stroke="#ed7d31" strokeWidth="1.500" />
    <circle cx="670" cy="547.500" r="3" fill="#ed7d31" />
    <AxisText x="686" y="523">n, об/мин</AxisText>
    <AxisText x="686" y="551">I, A</AxisText>

    <path d={smooth(iPts)} stroke="#ed7d31" strokeWidth="2" fill="none" />
    {iPts.map(p => <circle key={p[1]} cx={p[0]} cy={p[1]} r="3.500" fill="#ed7d31" />)}
    <path d={smooth(nPts)} stroke="#5b9bd5" strokeWidth="2" fill="none" />
    {nPts.map(p => <circle key={p[1]} cx={p[0]} cy={p[1]} r="3.500" fill="#5b9bd5" />)}
  </ChartBox>
);

const tabs = [
  ['Файл', 63], ['Главная', 71, true], ['Вставка', 71], ['Разметка страницы', 136], ['Формулы', 84],
  ['Данные', 72], ['Рецензирование', 120], ['Вид', 49], ['Надстройки', 95],
];
const columns = 'ABCDEFGHIJKLMNOPQRS'.split('');
const rows = range(31, i => 25 + i);

const App = () => (
  <Frame>
    <GlobalStyle />
    <Head>
      <Pattern width="500" height="59" viewBox="0 0 500 59">
        <g fill="#1f6a41">
          <circle cx="160" cy="25" r="24" />
          <circle cx="215" cy="12" r="26" />
          <circle cx="280" cy="22" r="30" />
          <rect x="140" y="0" width="205" height="52" rx="18" />
        </g>
        <circle cx="60" cy="0" r="24" fill="#1f6a41" />
        <circle cx="440" cy="28" r="34" fill="#237849" />
      </Pattern>
      <TitleRow>
        <Qat>
          <QatBtn><SaveIco /></QatBtn>
          <QatBtn $ml={15}><UndoIco /></QatBtn>
          <QatBtn $ml={4}><Caret $c="#fff" /></QatBtn>
          <QatBtn $ml={9} $dim><UndoIco flip /></QatBtn>
          <QatBtn $ml={4} $dim><Caret $c="#fff" /></QatBtn>
          <QatBtn $ml={6}><TouchIco /></QatBtn>
          <QatBtn $ml={5}><Caret $c="#fff" /></QatBtn>
          <QatBtn $ml={11}><OpenIco /></QatBtn>
          <QatBtn $ml={14}><NewIco /></QatBtn>
          <QatBtn $ml={18}><Customize /></QatBtn>
        </Qat>
        <Title>Построение в Excel графиков функций.xlsx - Excel (Сбой активации продукта)</Title>
        <WinBtns>
          <WinBtn><RibbonDisp /></WinBtn>
          <WinBtn><MinIco /></WinBtn>
          <WinBtn><RestoreIco /></WinBtn>
          <WinBtn><CloseIco /></WinBtn>
        </WinBtns>
      </TitleRow>
      <TabRow>
        {tabs.map(([name, w, active]) => <Tab key={name} $w={w} $active={active}>{name}</Tab>)}
        <Tell><Bulb />Что вы хотите сделать?</Tell>
        <User>
          Игорь Забора
          <Share><ShareIco />Общий доступ</Share>
        </User>
      </TabRow>
    </Head>

    <Ribbon>
      <Group $w={100}>
        <GroupBody>
          <BigBtn $w={62}>
            <BigIcon $pl={4}><PasteIco /></BigIcon>
            <TextLine>Вставить</TextLine>
            <TextLine><Caret /></TextLine>
          </BigBtn>
          <Stack $gap={8} $pt={2}>
            <CutIco />
            <Row $h={15}><CopyIco /><Caret $ml={5} /></Row>
            <BrushIco />
          </Stack>
        </GroupBody>
        <GroupLabel><span>Буфер обмена</span><LaunchIco /></GroupLabel>
      </Group>

      <Group $w={207}>
        <GroupBody $col $pl={4}>
          <Row $mt={7}>
            <Select $w={110}>Arial<Caret /></Select>
            <Select $w={43} $ml={1}>10<Caret /></Select>
            <IconBtn $w={24} $ml={2}><GrowA up s={13} /></IconBtn>
            <IconBtn $w={20}><GrowA s={11.5} /></IconBtn>
          </Row>
          <Row $h={25} $mt={7}>
            <IconBtn $w={19} $ml={2}><FontLetter>Ж</FontLetter></IconBtn>
            <IconBtn $w={20}><FontLetter $it>К</FontLetter></IconBtn>
            <IconBtn $w={28}><FontLetter $un>Ч</FontLetter></IconBtn>
            <Caret />
            <Sep $l={7} $r={8} />
            <BordersIco />
            <Caret $ml={7} />
            <Sep $l={7} $r={7} />
            <FillIco />
            <Caret $ml={5} />
            <IconBtn $w={17} $ml={6}><FontColor /></IconBtn>
            <Caret $ml={4} />
          </Row>
        </GroupBody>
        <GroupLabel><span>Шрифт</span></GroupLabel>
      </Group>

      <Group $w={167}>
        <GroupBody $col $pl={4}>
          <Row $mt={7}>
            <IconBtn><Lines ys={[2, 5, 8]} /></IconBtn>
            <IconBtn><Lines ys={[5, 8, 11]} /></IconBtn>
            <IconBtn $active><Lines ys={[8, 11, 14]} h={16} /></IconBtn>
            <IconBtn $ml={2}><OrientIco /></IconBtn>
            <Caret $ml={2} />
            <IconBtn $w={16} $ml={27}><WrapIco /></IconBtn>
          </Row>
          <Row $h={25} $mt={7}>
            <IconBtn><Lines ys={[1, 5, 9, 13]} xs={[[0, 14], [0, 10]]} /></IconBtn>
            <IconBtn><Lines ys={[1, 5, 9, 13]} xs={[[0, 14], [2, 12]]} /></IconBtn>
            <IconBtn><Lines ys={[1, 5, 9, 13]} xs={[[0, 14], [4, 14]]} /></IconBtn>
            <IconBtn $ml={3}><IndentIco /></IconBtn>
            <IconBtn><IndentIco rev /></IconBtn>
            <IconBtn $w={16} $ml={12}><MergeIco /></IconBtn>
            <Caret $ml={5} />
          </Row>
        </GroupBody>
        <GroupLabel><span>Выравнивание</span><LaunchIco /></GroupLabel>
      </Group>

      <Group $w={139}>
        <GroupBody $col $pl={3}>
          <Row $mt={7}>
            <Select $w={131}>Общий<Caret /></Select>
          </Row>
          <Row $h={25} $mt={7}>
            <IconBtn $w={18} $ml={3}><CurrencyIco /></IconBtn>
            <Caret $ml={5} />
            <IconBtn $w={20} $ml={3}><FontLetter $s={16} $wt={400}>%</FontLetter></IconBtn>
            <IconBtn $w={22} $ml={1}><FontLetter $s={9.5} $wt={400}>000</FontLetter></IconBtn>
            <Sep $l={4} $r={7} />
            <ZeroIco />
            <IconBtn $w={15} $ml={8}><ZeroIco dec /></IconBtn>
          </Row>
        </GroupBody>
        <GroupLabel><span>Число</span><LaunchIco /></GroupLabel>
      </Group>

      <Group $w={254}>
        <GroupBody $pl={5}>
          <BigBtn $w={106}>
            <BigIcon><CondIco /></BigIcon>
            <TextLine>Условное</TextLine>
            <TextLine>форматирование<Caret /></TextLine>
          </BigBtn>
          <BigBtn $w={90} $ml={2}>
            <BigIcon><TableIco /></BigIcon>
            <TextLine>Форматировать</TextLine>
            <TextLine>как таблицу<Caret /></TextLine>
          </BigBtn>
          <BigBtn $w={46} $ml={2}>
            <BigIcon><TableIco cell /></BigIcon>
            <TextLine>Стили</TextLine>
            <TextLine>ячеек<Caret /></TextLine>
          </BigBtn>
        </GroupBody>
        <GroupLabel><span>Стили</span></GroupLabel>
      </Group>

      <Group $w={99}>
        <GroupBody $col $pl={7}>
          <Stack $gap={3.5}>
            <CellRow><CellInsert />Вставить<Caret $ml={9} /></CellRow>
            <CellRow><CellDelete />Удалить<Caret $ml={9} /></CellRow>
            <CellRow><CellFormat />Формат<Caret $ml={3} /></CellRow>
          </Stack>
        </GroupBody>
        <GroupLabel><span>Ячейки</span></GroupLabel>
      </Group>

      <Group $w={180}>
        <GroupBody $pl={7}>
          <Stack $gap={3.5} $w={33}>
            <CellRow>
              <S w={16} h={14}><path d="M15 3V1H1l6.500 6L1 13h14v-2" stroke="#444" strokeWidth="2" /></S>
              <Caret $ml={3} />
            </CellRow>
            <CellRow><FillDown /><Caret $ml={3} /></CellRow>
            <CellRow><EraseIco /><Caret $ml={3} /></CellRow>
          </Stack>
          <BigBtn $w={68}>
            <BigIcon><SortIco /></BigIcon>
            <TextLine>Сортировка</TextLine>
            <TextLine>и фильтр<Caret /></TextLine>
          </BigBtn>
          <BigBtn $w={66} $ml={2}>
            <BigIcon><FindIco /></BigIcon>
            <TextLine>Найти и</TextLine>
            <TextLine>выделить<Caret /></TextLine>
          </BigBtn>
        </GroupBody>
        <GroupLabel><span>Редактирование</span></GroupLabel>
      </Group>
      <CollapseIco />
    </Ribbon>

    <SheetArea>
      <GridPane>
        <ColRow>
          <Corner />
          {columns.map(c => <ColHead key={c} $sel={c === 'R'}>{c}</ColHead>)}
        </ColRow>
        <BodyRow>
          <RowHeads>
            {rows.map(r => <RowHead key={r} $sel={r === 27}>{r}</RowHead>)}
          </RowHeads>
          <Cells>
            <Selection />
            <Chart />
          </Cells>
        </BodyRow>
      </GridPane>
      <VScroll>
        <ScrollBtn><TriUp /></ScrollBtn>
        <Thumb />
        <ScrollBtn $mt={18}><TriDown /></ScrollBtn>
      </VScroll>
    </SheetArea>

    <TabBar>
      <NavArrows>
        <TriSide $left $c="#b5b5b5" />
        <TriSide $c="#b5b5b5" />
      </NavArrows>
      <SheetTab>Лист1</SheetTab>
      <AddSheet width="16" height="16" viewBox="0 0 16 16">
        <circle cx="8" cy="8" r="7.300" fill="none" stroke="#8a8a8a" />
        <path d="M4 8h8M8 4v8" stroke="#777" strokeWidth="1.600" />
      </AddSheet>
      <Grip />
      <HScroll>
        <ScrollBtn $h={15}><TriSide $left /></ScrollBtn>
        <HThumb />
        <ScrollBtn $h={15}><TriSide /></ScrollBtn>
      </HScroll>
    </TabBar>

    <Status>
      <StatusText>Готово</StatusText>
      <ViewBtn $active>
        <S w={13} h={13}><path d="M.5.500h12v12H.5zM.5 4.500h12M.5 8.500h12M4.500.5v12M8.500.5v12" stroke="#666" /></S>
      </ViewBtn>
      <ViewBtn>
        <S w={14} h={13}><path d="M.5.500h13v12H.5z" stroke="#666" /><path d="M3 3h8v7H3zM5 5h4M5 7h4" stroke="#666" /></S>
      </ViewBtn>
      <ViewBtn>
        <S w={14} h={13}><path d="M.5.500h13v12H.5zM.5 8.500h13M7.500.5v8" stroke="#666" /></S>
      </ViewBtn>
      <Zoom>
        <S w={7} h={3}><rect width="7" height="2" y=".5" fill="#666" /></S>
        <Slider />
        <S w={8} h={8}><path d="M0 4h8M4 0v8" stroke="#666" strokeWidth="2" /></S>
        <Percent>100%</Percent>
      </Zoom>
    </Status>

    <Taskbar>
      <TaskSlot $w={40}><WinIco /></TaskSlot>
      <Dots />
      <TaskBtn $w={37} $ml={10} $active><FolderIco /></TaskBtn>
      <TaskBtn $w={5} />
      <TaskSlot $w={46} $ml={3}><ColorBall /></TaskSlot>
      <TaskSlot $w={45}><PresIco /></TaskSlot>
      <TaskSlot $w={45}><YaIco /></TaskSlot>
      <TaskSlot $w={47}><SteamIco /></TaskSlot>
      <TaskSlot $w={48}><SoundIco /></TaskSlot>
      <TaskSlot $w={47}><PptIco /></TaskSlot>
      <TaskSlot $w={46}><CalcIco /></TaskSlot>
      <TaskSlot $w={40}><PaletteIco /></TaskSlot>
      <TaskBtn $w={43} $ml={5}><PageIco /></TaskBtn>
      <TaskBtn $w={43} $ml={2}><FlashIco /></TaskBtn>
      <TaskBtn $w={38} $ml={3}><WordIco /></TaskBtn>
      <TaskBtn $w={5} />
      <TaskBtn $w={42} $ml={4} $active><ExcelIco /></TaskBtn>
      <Dots $ml={93} />
      <TaskSlot $w={102} $ml={3} $start>
        <TaskText>Рабочий стол</TaskText>
        <More>»</More>
      </TaskSlot>
      <Dots />
      <TaskSlot $w={24} $ml={14}><KeyboardIco /></TaskSlot>
      <TaskSlot $w={24} $ml={13}><KeyIco /></TaskSlot>
      <TaskSlot $w={24}><GreenBall /></TaskSlot>
      <TaskSlot $w={24}><CloudIco /></TaskSlot>
      <TaskSlot $w={24}><AdobeIco /></TaskSlot>
      <TaskSlot $w={24}><TealIco /></TaskSlot>
      <TaskSlot $w={24}><OrangeBall /></TaskSlot>
      <TaskSlot $w={24}><SignalIco /></TaskSlot>
      <TaskSlot $w={24}><FlagIco /></TaskSlot>
      <TaskSlot $w={24}><UsbIco /></TaskSlot>
      <TaskSlot $w={24}><BatteryIco /></TaskSlot>
      <TaskText $ml={11}>РУС</TaskText>
      <TaskText $ml={32}>11:23</TaskText>
    </Taskbar>
  </Frame>
);

export default App;
